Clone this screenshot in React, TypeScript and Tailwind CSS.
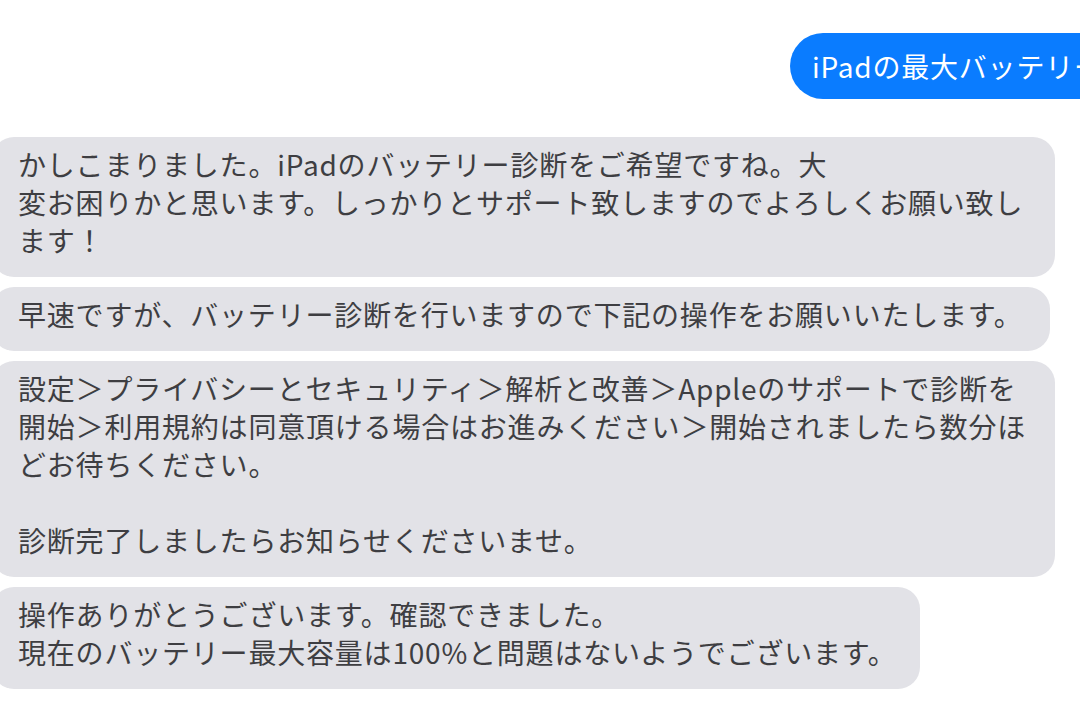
const bubbles = [
  {
    width: "w-[1063px]",
    text: "かしこまりました。iPadのバッテリー診断をご希望ですね。大\n変お困りかと思います。しっかりとサポート致しますのでよろしくお願い致し\nます！",
  },
  {
    width: "w-[1058px]",
    text: "早速ですが、バッテリー診断を行いますので下記の操作をお願いいたします。",
  },
  {
    width: "w-[1063px]",
    text: "設定＞プライバシーとセキュリティ＞解析と改善＞Appleのサポートで診断を\n開始＞利用規約は同意頂ける場合はお進みください＞開始されましたら数分ほ\nどお待ちください。\n\n診断完了しましたらお知らせくださいませ。",
  },
  {
    width: "w-[928px]",
    text: "操作ありがとうございます。確認できました。\n現在のバッテリー最大容量は100%と問題はないようでございます。",
  },
];

export default function App() {
  return (
    <div
      className="min-h-[719px] w-[1080px] overflow-hidden bg-white"
      style={{ fontFamily: '"Noto Sans CJK JP", "Noto Sans", sans-serif' }}
    >
      {/* sent message, runs off the right edge */}
      <div className="flex overflow-hidden pt-[33px]">
        <div className="ml-[790px] flex h-[66px] shrink-0 items-center whitespace-nowrap rounded-[33px] bg-[#0a7cff] pl-[22px] pr-[24px] text-[28px] tracking-[0.8px] text-white">
          iPadの最大バッテリー容量について
        </div>
      </div>

      {/* replies */}
      <div className="ml-[-8px] mt-[38px] flex flex-col items-start gap-[10px]">
        {bubbles.map((b, i) => (
          <div
            key={i}
            className={`${b.width} whitespace-pre-line rounded-[22px] bg-[#e2e2e7] pb-[18px] pl-[26px] pr-[16px] pt-[8px] text-[28px] leading-[38px] tracking-[0.8px] text-[#3e3e42]`}
          >
            {b.text}
          </div>
        ))}
      </div>
    </div>
  );
}
